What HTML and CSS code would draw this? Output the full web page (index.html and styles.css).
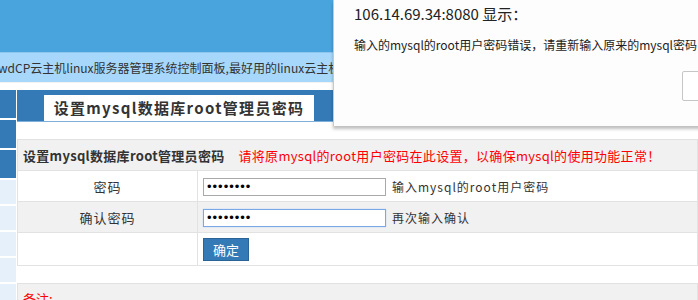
FILE: index.html
```html
<!DOCTYPE html>
<html>
  <head>
    <meta charset="UTF-8">
    <title>设置mysql数据库root管理员密码</title>
    <link rel="stylesheet" href="styles.css">
  </head>
  <body>
    <div class="top"></div>
    <div class="notice">
      <span class="marquee">wdCP云主机linux服务器管理系统控制面板,最好用的linux云主机</span>
    </div>
    <div class="page">
      <ul class="side">
        <li class="on"></li>
        <li class="on"></li>
        <li class="on"></li>
        <li></li>
        <li></li>
        <li></li>
        <li></li>
        <li></li>
      </ul>
      <div class="main">
        <div class="tabs">
          <span class="tab">设置mysql数据库root管理员密码</span>
        </div>
        <table class="form">
          <tr class="head">
            <td colspan="2"><b>设置mysql数据库root管理员密码</b><span class="warn">请将原mysql的root用户密码在此设置，以确保mysql的使用功能正常！</span></td>
          </tr>
          <tr>
            <td class="label">密码</td>
            <td><input type="password" class="txt" value="12345678"><span class="tip">输入mysql的root用户密码</span></td>
          </tr>
          <tr class="alt">
            <td class="label">确认密码</td>
            <td><input type="password" class="txt focus" value="12345678"><span class="tip">再次输入确认</span></td>
          </tr>
          <tr>
            <td class="label"></td>
            <td><button class="btn">确定</button></td>
          </tr>
        </table>
        <div class="memo">备注:</div>
      </div>
    </div>

    <div class="dialog">
      <div class="dialog-title">106.14.69.34:8080 显示：</div>
      <div class="dialog-msg">输入的mysql的root用户密码错误，请重新输入原来的mysql密码</div>
      <div class="dialog-foot"><button class="dialog-btn">确定</button></div>
    </div>
  </body>
</html>
```
FILE: styles.css
```css
body {
  margin: 0;
  width: 698px;
  height: 300px;
  overflow: hidden;
  position: relative;
  font-family: "Noto Sans CJK SC", "Microsoft YaHei", sans-serif;
  font-size: 12px;
  color: #333;
  background: #fff;
}
.top {
  height: 52px;
  background: #49a4de;
}
.notice {
  height: 30px;
  background: #a7d8fb;
  border-top: 1px solid #8fc6ee;
  box-sizing: border-box;
  font-size: 12px;
  line-height: 30px;
  white-space: nowrap;
  overflow: hidden;
}
.marquee {
  margin-left: -2px;
}
.page {
  display: flex;
  gap: 1px;
  padding-top: 7px;
  border-top: 1px solid #f2f2f2;
}
.side {
  list-style: none;
  margin: 0;
  padding: 0;
  width: 16px;
}
.side li {
  height: 24px;
  margin-bottom: 2px;
  background: #e6f0fb;
}
.side li.on {
  height: 28px;
  background: #337ab7;
}
.main {
  flex: 1;
}
.tabs {
  height: 32px;
  background: #337ab7;
  border-bottom: 1px solid #7fb0dc;
  box-sizing: border-box;
  display: flex;
  align-items: flex-end;
  padding-left: 27px;
}
.tab {
  background: #fff;
  height: 26px;
  width: 270px;
  font-size: 15px;
  font-weight: bold;
  letter-spacing: 1.3px;
  line-height: 26px;
  text-align: center;
  color: #333;
}
.form {
  margin-top: 17px;
  width: 100%;
  border-collapse: collapse;
  border: 1px solid #e2e2e2;
}
.form td {
  border: 1px solid #e2e2e2;
  height: 30px;
  padding: 0 5px;
  font-size: 12px;
}
.form .head td {
  background: #f1f1f2;
  font-size: 13px;
  letter-spacing: 0.3px;
  padding-left: 5px;
}
.warn {
  color: #f00;
  margin-left: 14px;
}
.form .alt td {
  background: #f1f1f2;
}
.form td.label {
  width: 169px;
  text-align: center;
  font-size: 13px;
  letter-spacing: 1px;
}
.form tr:last-child td {
  height: 32px;
}
.txt {
  width: 183px;
  height: 18px;
  box-sizing: border-box;
  border: 1px solid #a9a9a9;
  padding: 0 3px;
  font-size: 13px;
  letter-spacing: 1px;
  vertical-align: middle;
  margin: 0 6px 0 0;
  background: #fff;
}
.txt.focus {
  border-color: #7aa7e6;
  box-shadow: 0 0 1px #9cc0ef;
}
.tip {
  letter-spacing: 1px;
  vertical-align: middle;
}
.btn {
  width: 46px;
  height: 23px;
  background: #337ab7;
  border: 1px solid #2a6496;
  color: #fff;
  font-family: inherit;
  font-size: 13px;
  padding: 0;
  vertical-align: middle;
}
.memo {
  margin-top: 17px;
  height: 40px;
  background: #f1f1f2;
  border: 1px solid #e2e2e2;
  padding: 5px 5px;
  box-sizing: border-box;
  color: #f00;
  font-size: 13px;
}
.dialog {
  position: absolute;
  left: 333px;
  top: 0;
  width: 420px;
  height: 126px;
  background: #fdfdfd;
  border-left: 1px solid #c8c8c8;
  box-shadow: 0 3px 3px rgba(0, 0, 0, 0.25);
  padding: 4px 0 0 20px;
  box-sizing: border-box;
}
.dialog-title {
  font-size: 15px;
  color: #222;
  line-height: 20px;
}
.dialog-msg {
  margin-top: 13px;
  font-size: 12px;
  color: #222;
  line-height: 16px;
  white-space: nowrap;
}
.dialog-foot {
  margin-top: 18px;
  padding-left: 328px;
}
.dialog-btn {
  width: 70px;
  height: 30px;
  border: 1px solid #c6c6c6;
  border-radius: 2px;
  background: #fff;
  font-size: 12px;
}
```
